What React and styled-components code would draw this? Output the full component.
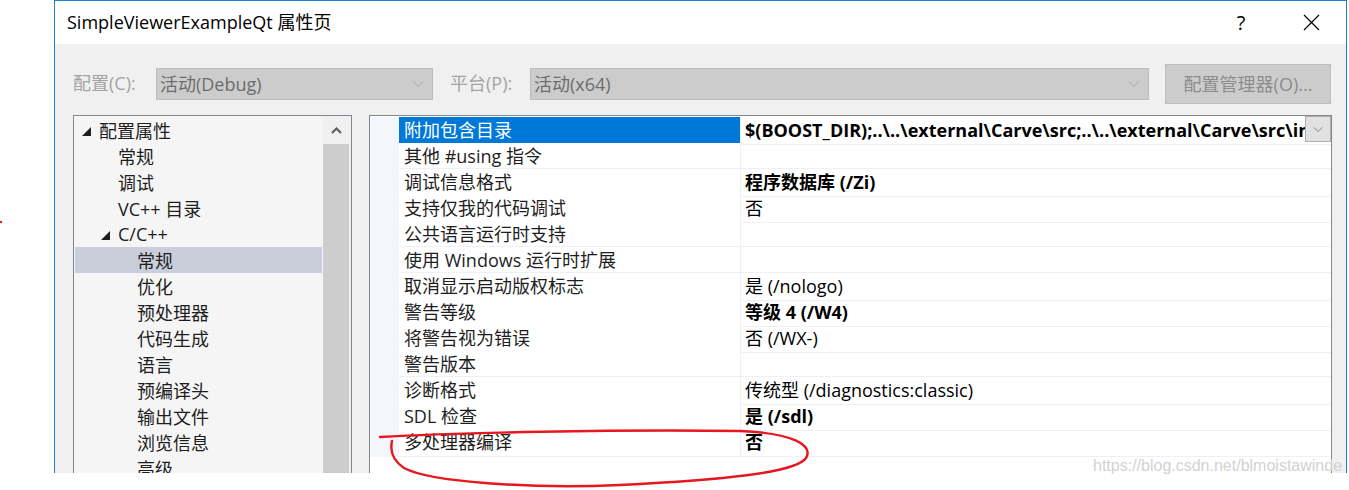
import React from 'react';
import styled, { createGlobalStyle } from 'styled-components';

const GlobalStyle = createGlobalStyle`
  html, body {
    margin: 0;
    padding: 0;
    background: #fff;
  }
  body {
    font-family: "Open Sans", "Noto Sans CJK SC", sans-serif;
    color: #1e1e1e;
  }
`;

const Page = styled.div`
  position: relative;
  width: 1349px;
  height: 490px;
  padding-left: 54px;
  box-sizing: border-box;
  overflow: hidden;
`;

const Dialog = styled.div`
  width: 1293px;
  height: 473px;
  box-sizing: border-box;
  border: 1px solid #1883d7;
  border-bottom: none;
  background: #f0f0f0;
  display: flex;
  flex-direction: column;
  overflow: hidden;
`;

const TitleBar = styled.div`
  height: 43px;
  flex: none;
  background: #fff;
  display: flex;
  align-items: center;
  padding-left: 12px;
`;

const Title = styled.div`
  flex: 1;
  font-size: 18px;
  color: #000;
  padding-bottom: 3px;
`;

const TitleButton = styled.div`
  width: 70px;
  height: 43px;
  display: flex;
  align-items: center;
  justify-content: center;
  font-size: 20px;
  color: #000;
`;

const Toolbar = styled.div`
  height: 71px;
  flex: none;
  box-sizing: border-box;
  display: flex;
  align-items: flex-start;
  padding: 20px 0 0 18px;
`;

const Label = styled.div`
  width: ${p => p.w}px;
  margin-left: ${p => p.ml || 0}px;
  margin-top: 4px;
  height: 32px;
  line-height: 31px;
  font-size: 18px;
  color: #a3a3a3;
`;

const Combo = styled.div`
  width: ${p => p.w}px;
  height: 32px;
  margin-top: 4px;
  box-sizing: border-box;
  border: 1px solid #bdbdbd;
  background: #cccccc;
  display: flex;
  align-items: center;
  padding: 0 8px 0 3px;
  font-size: 18px;
  color: #6d6d6d;
`;

const ComboText = styled.span`
  flex: 1;
  padding-bottom: 2px;
`;

const Button = styled.div`
  width: 166px;
  height: 40px;
  margin-left: 16px;
  box-sizing: border-box;
  border: 1px solid #bfbfbf;
  background: #cccccc;
  display: flex;
  align-items: center;
  justify-content: center;
  font-size: 18px;
  color: #8c8c8c;
  padding-bottom: 2px;
`;

const Main = styled.div`
  flex: 1;
  display: flex;
  gap: 17px;
  padding-left: 18px;
  min-height: 0;
`;

const TreePanel = styled.div`
  width: 279px;
  box-sizing: border-box;
  border: 1px solid #828790;
  border-bottom: none;
  background: #f5f5f5;
  display: flex;
`;

const TreeList = styled.div`
  width: 251px;
  padding: 1px 1px 0;
  box-sizing: border-box;
`;

const TreeRow = styled.div`
  height: 26px;
  display: flex;
  align-items: center;
  padding-left: ${p => 24 + p.level * 19}px;
  background: ${p => (p.selected ? '#cacdda' : 'transparent')};
  font-size: 18px;
  color: #1e1e1e;
  white-space: nowrap;
`;

const Arrow = styled.span`
  width: 17px;
  margin-left: -17px;
  display: flex;
  align-items: center;
  padding-top: 2px;
`;

const RowText = styled.span`
  padding-bottom: 0;
`;

const Scrollbar = styled.div`
  width: 26px;
  padding-right: 2px;
  display: flex;
  flex-direction: column;
  background: #f0f0f0;
`;

const ScrollArrow = styled.div`
  height: 28px;
  display: flex;
  align-items: center;
  justify-content: center;
`;

const ScrollThumb = styled.div`
  flex: 1;
  background: #cdcdcd;
`;

const GridPanel = styled.div`
  width: 963px;
  box-sizing: border-box;
  border: 1px solid #828790;
  border-bottom: none;
  background: #fff;
  padding-top: 1px;
`;

const PropRow = styled.div`
  display: grid;
  grid-template-columns: 29px 342px 1fr;
  height: 26px;
`;

const Gutter = styled.div`
  background: #f3f6fb;
`;

const NameCell = styled.div`
  border-bottom: 1px solid #edf0f6;
  border-right: 1px solid #edf0f6;
  background: ${p => (p.selected ? '#0078d7' : '#fff')};
  color: ${p => (p.selected ? '#fff' : '#1e1e1e')};
  font-size: 18px;
  line-height: 27px;
  padding-left: 5px;
  white-space: nowrap;
  overflow: hidden;
`;

const ValueCell = styled.div`
  border-bottom: 1px solid #edf0f6;
  display: flex;
  min-width: 0;
  font-size: 18px;
  line-height: 27px;
  font-weight: ${p => (p.bold ? 700 : 400)};
  color: #000;
`;

const ValueText = styled.span`
  flex: 1;
  padding-left: 4px;
  white-space: nowrap;
  overflow: hidden;
`;

const DropButton = styled.div`
  width: 26px;
  height: 26px;
  margin-top: -1px;
  box-sizing: border-box;
  border: 1px solid #adadad;
  background: #e1e1e1;
  display: flex;
  align-items: center;
  justify-content: center;
`;

const Annotation = styled.svg`
  position: absolute;
  left: 0;
  top: 0;
  pointer-events: none;
`;

const Watermark = styled.div`
  position: absolute;
  left: 1093px;
  top: 457px;
  font-family: "Liberation Sans", Arial, sans-serif;
  font-size: 16px;
  color: #d2d2d2;
  white-space: nowrap;
`;

const Dot = styled.div`
  position: absolute;
  left: 0;
  top: 221px;
  width: 2px;
  height: 2px;
  background: #e02020;
`;

const Chevron = ({ color = '#a6a6a6', size = 12 }) => (
  <svg width={size} height={size / 2 + 2} viewBox="0 0 12 8">
    <path d="M1 1.5 L6 6.5 L11 1.5" fill="none" stroke={color} strokeWidth="1" />
  </svg>
);

const treeItems = [
  { label: '配置属性', level: 0, open: true },
  { label: '常规', level: 1 },
  { label: '调试', level: 1 },
  { label: 'VC++ 目录', level: 1 },
  { label: 'C/C++', level: 1, open: true },
  { label: '常规', level: 2, selected: true },
  { label: '优化', level: 2 },
  { label: '预处理器', level: 2 },
  { label: '代码生成', level: 2 },
  { label: '语言', level: 2 },
  { label: '预编译头', level: 2 },
  { label: '输出文件', level: 2 },
  { label: '浏览信息', level: 2 },
  { label: '高级', level: 2 },
];

const props = [
  { name: '附加包含目录', value: '$(BOOST_DIR);..\\..\\external\\Carve\\src;..\\..\\external\\Carve\\src\\include', bold: true, selected: true },
  { name: '其他 #using 指令', value: '' },
  { name: '调试信息格式', value: '程序数据库 (/Zi)', bold: true },
  { name: '支持仅我的代码调试', value: '否' },
  { name: '公共语言运行时支持', value: '' },
  { name: '使用 Windows 运行时扩展', value: '' },
  { name: '取消显示启动版权标志', value: '是 (/nologo)' },
  { name: '警告等级', value: '等级 4 (/W4)', bold: true },
  { name: '将警告视为错误', value: '否 (/WX-)' },
  { name: '警告版本', value: '' },
  { name: '诊断格式', value: '传统型 (/diagnostics:classic)' },
  { name: 'SDL 检查', value: '是 (/sdl)', bold: true },
  { name: '多处理器编译', value: '否', bold: true },
];

export default function App() {
  return (
    <Page>
      <GlobalStyle />
      <Dialog>
        <TitleBar>
          <Title>SimpleViewerExampleQt 属性页</Title>
          <TitleButton>?</TitleButton>
          <TitleButton>
            <svg width="17" height="17" viewBox="0 0 17 17">
              <path d="M1 1 L16 16 M16 1 L1 16" stroke="#000" strokeWidth="1.2" />
            </svg>
          </TitleButton>
        </TitleBar>

        <Toolbar>
          <Label w={83}>配置(C):</Label>
          <Combo w={277}>
            <ComboText>活动(Debug)</ComboText>
            <Chevron />
          </Combo>
          <Label w={80} ml={17}>平台(P):</Label>
          <Combo w={619}>
            <ComboText>活动(x64)</ComboText>
            <Chevron />
          </Combo>
          <Button>配置管理器(O)...</Button>
        </Toolbar>

        <Main>
          <TreePanel>
            <TreeList>
              {treeItems.map((item, i) => (
                <TreeRow key={i} level={item.level} selected={item.selected}>
                  {item.open && (
                    <Arrow>
                      <svg width="9" height="9" viewBox="0 0 9 9">
                        <polygon points="9,0 9,9 0,9" fill="#1e1e1e" />
                      </svg>
                    </Arrow>
                  )}
                  <RowText>{item.label}</RowText>
                </TreeRow>
              ))}
            </TreeList>
            <Scrollbar>
              <ScrollArrow>
                <svg width="11" height="7" viewBox="0 0 11 7">
                  <path d="M1 6 L5.5 1.5 L10 6" fill="none" stroke="#606060" strokeWidth="2.2" />
                </svg>
              </ScrollArrow>
              <ScrollThumb />
            </Scrollbar>
          </TreePanel>

          <GridPanel>
            {props.map((p, i) => (
              <PropRow key={i}>
                <Gutter />
                <NameCell selected={p.selected}>{p.name}</NameCell>
                <ValueCell bold={p.bold}>
                  <ValueText>{p.value}</ValueText>
                  {p.selected && (
                    <DropButton>
                      <Chevron color="#707070" size={10} />
                    </DropButton>
                  )}
                </ValueCell>
              </PropRow>
            ))}
          </GridPanel>
        </Main>
      </Dialog>

      <Watermark>https://blog.csdn.net/blmoistawinde</Watermark>
      <Dot />
      <Annotation width="1349" height="490" viewBox="0 0 1349 490">
        <path
          d="M380 437 C450 433, 620 429, 740 431 C792 433, 814 445, 806 458 C796 473, 720 480, 620 485 C530 489, 430 482, 404 468 C392 460, 390 450, 392 441"
          fill="none"
          stroke="#e8161e"
          strokeWidth="2.4"
          strokeLinecap="round"
        />
      </Annotation>
    </Page>
  );
}
